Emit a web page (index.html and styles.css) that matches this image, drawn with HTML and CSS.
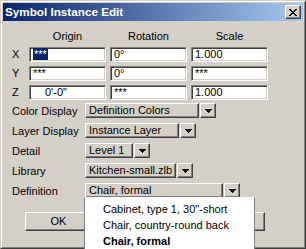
FILE: index.html
```html
<!DOCTYPE html>
<html>
<head>
<meta charset="utf-8">
<link rel="stylesheet" href="styles.css">
</head>
<body>
<div class="window">
  <div class="titlebar">
    <span class="title">Symbol Instance Edit</span>
    <span class="close"><svg width="8" height="7" viewBox="0 0 8 7" shape-rendering="crispEdges"><path d="M0 0h2v1H0z M6 0h2v1H6z M1 1h2v1H1z M5 1h2v1H5z M2 2h4v1H2z M3 3h2v1H3z M2 4h4v1H2z M1 5h2v1H1z M5 5h2v1H5z M0 6h2v1H0z M6 6h2v1H6z" fill="#000"/></svg></span>
  </div>
  <div class="content">
    <div class="coords">
      <span></span><span class="head">Origin</span><span class="head">Rotation</span><span class="head">Scale</span>
      <span class="axis">X</span><span class="field"><span class="selected">***</span></span><span class="field">0°</span><span class="field">1.000</span>
      <span class="axis">Y</span><span class="field">***</span><span class="field">0°</span><span class="field">***</span>
      <span class="axis">Z</span><span class="field indent">0'-0"</span><span class="field">***</span><span class="field">1.000</span>
    </div>
    <div class="props">
      <div class="prop"><span class="plabel">Color Display</span><span class="combo"><span class="cbox w-color">Definition Colors</span><span class="arrow"><svg width="7" height="4" viewBox="0 0 7 4" shape-rendering="crispEdges"><path d="M0 0h7v1H0z M1 1h5v1H1z M2 2h3v1H2z M3 3h1v1H3z" fill="#000"/></svg></span></span></div>
      <div class="prop"><span class="plabel">Layer Display</span><span class="combo"><span class="cbox w-layer">Instance Layer</span><span class="arrow"><svg width="7" height="4" viewBox="0 0 7 4" shape-rendering="crispEdges"><path d="M0 0h7v1H0z M1 1h5v1H1z M2 2h3v1H2z M3 3h1v1H3z" fill="#000"/></svg></span></span></div>
      <div class="prop"><span class="plabel">Detail</span><span class="combo"><span class="cbox w-detail">Level 1</span><span class="arrow"><svg width="7" height="4" viewBox="0 0 7 4" shape-rendering="crispEdges"><path d="M0 0h7v1H0z M1 1h5v1H1z M2 2h3v1H2z M3 3h1v1H3z" fill="#000"/></svg></span></span></div>
      <div class="prop"><span class="plabel">Library</span><span class="combo"><span class="cbox w-lib">Kitchen-small.zlb</span><span class="arrow"><svg width="7" height="4" viewBox="0 0 7 4" shape-rendering="crispEdges"><path d="M0 0h7v1H0z M1 1h5v1H1z M2 2h3v1H2z M3 3h1v1H3z" fill="#000"/></svg></span></span></div>
      <div class="prop"><span class="plabel">Definition</span><span class="combo"><span class="cbox w-def">Chair, formal</span><span class="arrow"><svg width="7" height="4" viewBox="0 0 7 4" shape-rendering="crispEdges"><path d="M0 0h7v1H0z M1 1h5v1H1z M2 2h3v1H2z M3 3h1v1H3z" fill="#000"/></svg></span></span></div>
    </div>
    <div class="buttons"><span class="btn">OK</span><span class="btn" aria-label="Cancel"></span></div>
    <div class="dropdown">
      <div class="item">Cabinet, type 1, 30"-short</div>
      <div class="item">Chair, country-round back</div>
      <div class="item current">Chair, formal</div>
    </div>
  </div>
</div>
</body>
</html>
```

FILE: styles.css
```css
* { box-sizing: border-box; }
html, body { margin: 0; padding: 0; background: #d4d0c8; overflow: hidden; }
body { font-family: "Liberation Sans", Arial, sans-serif; font-size: 11px; color: #000; }

.window {
  width: 306px;
  height: 249px;
  border: 1px solid;
  border-color: #d4d0c8 #404040 #404040 #d4d0c8;
  box-shadow: inset 1px 1px #fff, inset -1px -1px #808080;
  padding: 2px;
  background: #d4d0c8;
}

.titlebar {
  height: 18px;
  background: linear-gradient(to right, #0a246a, #a6caf0);
  display: flex;
  align-items: center;
  justify-content: space-between;
  padding: 0 2px 0 2px;
}
.title {
  color: #fff;
  font-weight: bold;
  font-size: 11.7px;
  line-height: 14px;
}
.close {
  width: 16px;
  height: 14px;
  background: #d4d0c8;
  border: 1px solid;
  border-color: #fff #404040 #404040 #fff;
  box-shadow: inset -1px -1px #808080;
  display: flex;
  align-items: center;
  justify-content: center;
}
.close svg { display: block; }

.content { position: relative; height: 226px; }

.coords {
  display: grid;
  grid-template-columns: 22px 77px 77px 77px;
  grid-template-rows: 13px 15px 15px 15px;
  column-gap: 4px;
  row-gap: 4px;
  padding-top: 9px;
}
.head { text-align: center; line-height: 13px; }
.axis { padding-left: 9px; line-height: 15px; }
.field {
  background: #fff;
  border: 1px solid;
  border-color: #808080 #fff #fff #808080;
  box-shadow: inset 1px 1px #404040, inset -1px -1px #d4d0c8;
  line-height: 13px;
  padding-left: 3px;
  white-space: nowrap;
  overflow: hidden;
}
.field.indent { padding-left: 15px; }
.selected { background: #0a246a; color: #fff; padding: 0 1px; }

.props {
  display: flex;
  flex-direction: column;
  gap: 5px;
  margin-top: 3px;
}
.prop { display: flex; align-items: center; height: 15px; }
.plabel { width: 82px; padding-left: 9px; }
.combo { display: flex; gap: 1px; height: 15px; }
.cbox, .arrow, .btn {
  background: #d4d0c8;
  border: 1px solid;
  border-color: #fff #404040 #404040 #fff;
  box-shadow: inset -1px -1px #808080;
}
.cbox { line-height: 13px; padding-left: 3px; white-space: nowrap; overflow: hidden; }
.w-color { width: 114px; }
.w-layer { width: 94px; }
.w-detail { width: 48px; }
.w-lib { width: 91px; }
.w-def { width: 138px; }
.arrow { width: 16px; display: flex; align-items: center; justify-content: center; }
.arrow svg { display: block; }

.buttons {
  display: flex;
  gap: 106px;
  padding-left: 22px;
  margin-top: 14px;
}
.btn {
  width: 67px;
  height: 19px;
  line-height: 17px;
  text-align: center;
}

.dropdown {
  position: absolute;
  left: 81px;
  top: 176px;
  width: 171px;
  height: 60px;
  background: #fff;
  border: 1px solid #808080;
  border-top-color: #fff;
  padding-top: 3px;
}
.item { height: 16px; line-height: 16px; padding-left: 18px; white-space: nowrap; }
.item.current { font-weight: bold; }
```
